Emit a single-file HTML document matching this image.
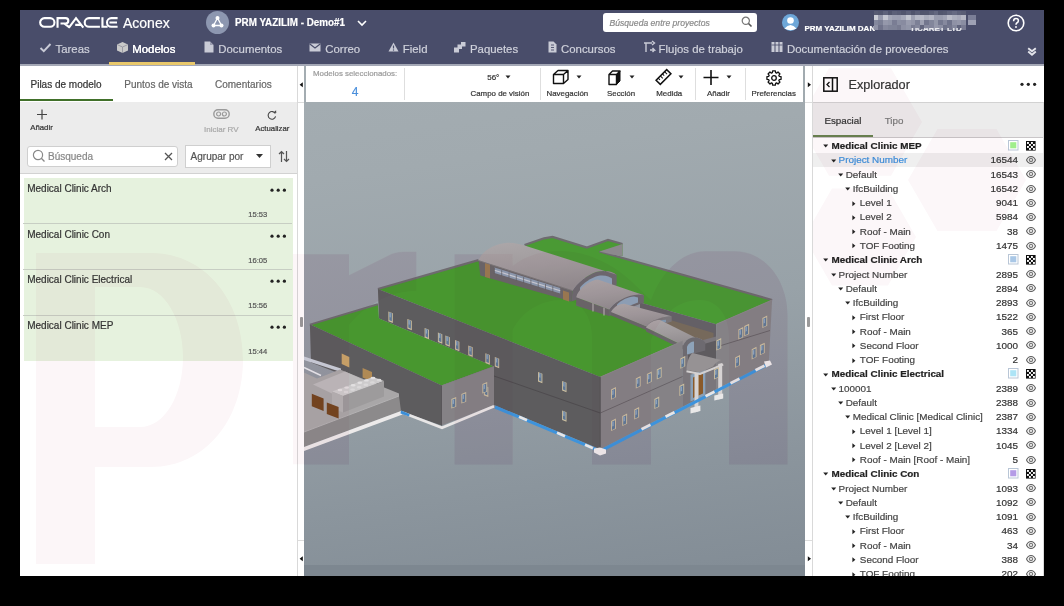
<!DOCTYPE html><html><head><meta charset="utf-8"><style>
html,body{margin:0;padding:0;}
body{width:1064px;height:606px;background:#000;position:relative;overflow:hidden;font-family:"Liberation Sans",sans-serif;}
.t{position:absolute;white-space:nowrap;-webkit-text-stroke:0.2px;}
.r{position:absolute;}
.s{position:absolute;overflow:visible;}
</style></head><body>
<div class="r" style="left:20px;top:10px;width:1024px;height:566px;background:#ffffff;"></div><div class="r" style="left:20px;top:10px;width:1024px;height:54px;background:#494d6a;"></div><div class="r" style="left:20px;top:64px;width:1024px;height:2px;background:#a4a8b6;"></div><div class="r" style="left:109px;top:62px;width:86px;height:3px;background:#e9c86a;"></div><svg class="s" style="left:39px;top:17px;" width="80" height="12" viewBox="0 0 80 12"><g stroke="#fff" stroke-width="2.1" fill="none"><rect x="1.15" y="1.15" width="14.3" height="8.6" rx="4.3"/><path d="M18.55,10.7 V1.15 H26.6 A2.7,2.7 0 0 1 26.6,6.55 H21.5 M25.5,6.55 L30.8,10.7"/><path d="M29.9,10.7 L37,1.2 L44.3,10.7 M36.2,7.9 H42.2"/><path d="M60.9,1.15 H50 A4.3,4.3 0 0 0 50,9.75 H60.9"/><path d="M63.45,0.2 V9.75 H68.6"/><path d="M78.6,1.15 H72.3 A4.3,4.3 0 0 0 72.3,9.75 H78.6 M70.5,5.45 H78"/></g></svg><div class="t" style="left:123.0px;top:16.45px;font-size:14px;line-height:14px;color:#fff;font-weight:400;font-style:normal;">Aconex</div><svg class="s" style="left:206px;top:11px;" width="23" height="23" viewBox="0 0 23 23"><circle cx="11.5" cy="11.5" r="11.5" fill="#8d97b0"/><g stroke="#fff" stroke-width="1.3" fill="none"><path d="M11.5 7 L7.5 14.5 L15.5 14.5 Z"/></g><g fill="#fff"><circle cx="11.5" cy="7" r="2"/><circle cx="7.5" cy="14.5" r="2"/><circle cx="15.5" cy="14.5" r="2"/></g></svg><div class="t" style="left:234.5px;top:16.99px;font-size:11px;line-height:11px;color:#fff;font-weight:700;font-style:normal;transform:scaleX(0.895);transform-origin:0 0;">PRM YAZILIM - Demo#1</div><svg class="s" style="left:356px;top:19px;" width="12" height="8" viewBox="0 0 12 8"><path d="M2 2 L6 6 L10 2" stroke="#fff" stroke-width="1.6" fill="none"/></svg><div class="r" style="left:603px;top:13px;width:154px;height:19px;background:#fff;border-radius:3px;"></div><div class="t" style="left:609.5px;top:19.02px;font-size:8.6px;line-height:8.6px;color:#8a8a8a;font-weight:400;font-style:italic;">Búsqueda entre proyectos</div><svg class="s" style="left:741px;top:16px;" width="12" height="12" viewBox="0 0 12 12"><circle cx="4.8" cy="4.8" r="3.6" stroke="#777" stroke-width="1.2" fill="none"/><path d="M7.5 7.5 L10.5 10.5" stroke="#555" stroke-width="1.6"/></svg><svg class="s" style="left:782px;top:14px;" width="17" height="17" viewBox="0 0 17 17"><circle cx="8.5" cy="8.5" r="8.5" fill="#6ea7d8"/><circle cx="8.5" cy="6.5" r="3.3" fill="#fff"/><path d="M2.5 14.5 Q8.5 7.5 14.5 14.5 Q8.5 18 2.5 14.5Z" fill="#fff"/></svg><div class="t" style="left:804.5px;top:24.53px;font-size:8px;line-height:8px;color:#fff;font-weight:700;font-style:normal;">PRM YAZILIM DAN</div><div class="r" style="left:873.8px;top:10.6px;width:92px;height:20px;overflow:hidden;"><div class="r" style="left:0.0px;top:0.0px;width:4.7px;height:4.9px;background:#575b73"></div><div class="r" style="left:4.6px;top:0.0px;width:4.7px;height:4.9px;background:#53576f"></div><div class="r" style="left:9.2px;top:0.0px;width:4.7px;height:4.9px;background:#5f637b"></div><div class="r" style="left:13.8px;top:0.0px;width:4.7px;height:4.9px;background:#51556d"></div><div class="r" style="left:18.4px;top:0.0px;width:4.7px;height:4.9px;background:#5c6078"></div><div class="r" style="left:23.0px;top:0.0px;width:4.7px;height:4.9px;background:#585c74"></div><div class="r" style="left:27.6px;top:0.0px;width:4.7px;height:4.9px;background:#51556d"></div><div class="r" style="left:32.2px;top:0.0px;width:4.7px;height:4.9px;background:#5c6078"></div><div class="r" style="left:36.8px;top:0.0px;width:4.7px;height:4.9px;background:#50546c"></div><div class="r" style="left:41.4px;top:0.0px;width:4.7px;height:4.9px;background:#5a5e76"></div><div class="r" style="left:46.0px;top:0.0px;width:4.7px;height:4.9px;background:#51556d"></div><div class="r" style="left:50.6px;top:0.0px;width:4.7px;height:4.9px;background:#52566e"></div><div class="r" style="left:55.2px;top:0.0px;width:4.7px;height:4.9px;background:#5a5e76"></div><div class="r" style="left:59.8px;top:0.0px;width:4.7px;height:4.9px;background:#63677f"></div><div class="r" style="left:64.4px;top:0.0px;width:4.7px;height:4.9px;background:#52566e"></div><div class="r" style="left:69.0px;top:0.0px;width:4.7px;height:4.9px;background:#555971"></div><div class="r" style="left:73.6px;top:0.0px;width:4.7px;height:4.9px;background:#5f637b"></div><div class="r" style="left:78.2px;top:0.0px;width:4.7px;height:4.9px;background:#666a82"></div><div class="r" style="left:82.8px;top:0.0px;width:4.7px;height:4.9px;background:#5d6179"></div><div class="r" style="left:87.4px;top:0.0px;width:4.7px;height:4.9px;background:#595d75"></div><div class="r" style="left:0.0px;top:4.8px;width:4.7px;height:4.9px;background:#cbcdd6"></div><div class="r" style="left:4.6px;top:4.8px;width:4.7px;height:4.9px;background:#989bae"></div><div class="r" style="left:9.2px;top:4.8px;width:4.7px;height:4.9px;background:#c5c7d1"></div><div class="r" style="left:13.8px;top:4.8px;width:4.7px;height:4.9px;background:#a5a8b8"></div><div class="r" style="left:18.4px;top:4.8px;width:4.7px;height:4.9px;background:#9da0b2"></div><div class="r" style="left:23.0px;top:4.8px;width:4.7px;height:4.9px;background:#9c9fb1"></div><div class="r" style="left:27.6px;top:4.8px;width:4.7px;height:4.9px;background:#a6a9b9"></div><div class="r" style="left:32.2px;top:4.8px;width:4.7px;height:4.9px;background:#c2c5cf"></div><div class="r" style="left:36.8px;top:4.8px;width:4.7px;height:4.9px;background:#9fa2b3"></div><div class="r" style="left:41.4px;top:4.8px;width:4.7px;height:4.9px;background:#b5b8c5"></div><div class="r" style="left:46.0px;top:4.8px;width:4.7px;height:4.9px;background:#b9bbc8"></div><div class="r" style="left:50.6px;top:4.8px;width:4.7px;height:4.9px;background:#aaadbc"></div><div class="r" style="left:55.2px;top:4.8px;width:4.7px;height:4.9px;background:#b4b6c4"></div><div class="r" style="left:59.8px;top:4.8px;width:4.7px;height:4.9px;background:#999cae"></div><div class="r" style="left:64.4px;top:4.8px;width:4.7px;height:4.9px;background:#999cae"></div><div class="r" style="left:69.0px;top:4.8px;width:4.7px;height:4.9px;background:#a1a4b5"></div><div class="r" style="left:73.6px;top:4.8px;width:4.7px;height:4.9px;background:#bbbdc9"></div><div class="r" style="left:78.2px;top:4.8px;width:4.7px;height:4.9px;background:#adb0be"></div><div class="r" style="left:82.8px;top:4.8px;width:4.7px;height:4.9px;background:#a7a9b9"></div><div class="r" style="left:87.4px;top:4.8px;width:4.7px;height:4.9px;background:#b6b8c5"></div><div class="r" style="left:0.0px;top:9.6px;width:4.7px;height:4.9px;background:#84889d"></div><div class="r" style="left:4.6px;top:9.6px;width:4.7px;height:4.9px;background:#7c8096"></div><div class="r" style="left:9.2px;top:9.6px;width:4.7px;height:4.9px;background:#9598ab"></div><div class="r" style="left:13.8px;top:9.6px;width:4.7px;height:4.9px;background:#9094a7"></div><div class="r" style="left:18.4px;top:9.6px;width:4.7px;height:4.9px;background:#7a7d94"></div><div class="r" style="left:23.0px;top:9.6px;width:4.7px;height:4.9px;background:#8a8ea2"></div><div class="r" style="left:27.6px;top:9.6px;width:4.7px;height:4.9px;background:#888ba0"></div><div class="r" style="left:32.2px;top:9.6px;width:4.7px;height:4.9px;background:#999cae"></div><div class="r" style="left:36.8px;top:9.6px;width:4.7px;height:4.9px;background:#9295a8"></div><div class="r" style="left:41.4px;top:9.6px;width:4.7px;height:4.9px;background:#7c8096"></div><div class="r" style="left:46.0px;top:9.6px;width:4.7px;height:4.9px;background:#9fa2b3"></div><div class="r" style="left:50.6px;top:9.6px;width:4.7px;height:4.9px;background:#73778e"></div><div class="r" style="left:55.2px;top:9.6px;width:4.7px;height:4.9px;background:#82869b"></div><div class="r" style="left:59.8px;top:9.6px;width:4.7px;height:4.9px;background:#9397a9"></div><div class="r" style="left:64.4px;top:9.6px;width:4.7px;height:4.9px;background:#757990"></div><div class="r" style="left:69.0px;top:9.6px;width:4.7px;height:4.9px;background:#86899e"></div><div class="r" style="left:73.6px;top:9.6px;width:4.7px;height:4.9px;background:#6f738b"></div><div class="r" style="left:78.2px;top:9.6px;width:4.7px;height:4.9px;background:#8f92a6"></div><div class="r" style="left:82.8px;top:9.6px;width:4.7px;height:4.9px;background:#9497aa"></div><div class="r" style="left:87.4px;top:9.6px;width:4.7px;height:4.9px;background:#8a8ea2"></div><div class="r" style="left:0.0px;top:14.4px;width:4.7px;height:4.9px;background:#8f92a6"></div><div class="r" style="left:4.6px;top:14.4px;width:4.7px;height:4.9px;background:#70738b"></div><div class="r" style="left:9.2px;top:14.4px;width:4.7px;height:4.9px;background:#85889d"></div><div class="r" style="left:13.8px;top:14.4px;width:4.7px;height:4.9px;background:#7f8398"></div><div class="r" style="left:18.4px;top:14.4px;width:4.7px;height:4.9px;background:#7e8297"></div><div class="r" style="left:23.0px;top:14.4px;width:4.7px;height:4.9px;background:#787b91"></div><div class="r" style="left:27.6px;top:14.4px;width:4.7px;height:4.9px;background:#8d90a4"></div><div class="r" style="left:32.2px;top:14.4px;width:4.7px;height:4.9px;background:#9296a9"></div><div class="r" style="left:36.8px;top:14.4px;width:4.7px;height:4.9px;background:#797c92"></div><div class="r" style="left:41.4px;top:14.4px;width:4.7px;height:4.9px;background:#83869b"></div><div class="r" style="left:46.0px;top:14.4px;width:4.7px;height:4.9px;background:#62667e"></div><div class="r" style="left:50.6px;top:14.4px;width:4.7px;height:4.9px;background:#85889d"></div><div class="r" style="left:55.2px;top:14.4px;width:4.7px;height:4.9px;background:#82859b"></div><div class="r" style="left:59.8px;top:14.4px;width:4.7px;height:4.9px;background:#9598ab"></div><div class="r" style="left:64.4px;top:14.4px;width:4.7px;height:4.9px;background:#8c8fa3"></div><div class="r" style="left:69.0px;top:14.4px;width:4.7px;height:4.9px;background:#6e7289"></div><div class="r" style="left:73.6px;top:14.4px;width:4.7px;height:4.9px;background:#74778e"></div><div class="r" style="left:78.2px;top:14.4px;width:4.7px;height:4.9px;background:#83879c"></div><div class="r" style="left:82.8px;top:14.4px;width:4.7px;height:4.9px;background:#60647d"></div><div class="r" style="left:87.4px;top:14.4px;width:4.7px;height:4.9px;background:#787b92"></div></div><div class="r" style="left:968px;top:15.2px;width:7.8px;height:4.6px;background:#7b7f97;"></div><div class="r" style="left:968px;top:19.8px;width:7.8px;height:5.3px;background:#9ea1b4;"></div><div class="t" style="left:910.0px;top:24.53px;font-size:8px;line-height:8px;color:#e8e9ee;font-weight:700;font-style:normal;clip-path:inset(45% 0 0 0);">TICARET LTD</div><svg class="s" style="left:1007px;top:14px;" width="18" height="18" viewBox="0 0 18 18"><circle cx="9" cy="9" r="7.8" stroke="#fff" stroke-width="1.6" fill="none"/><path d="M6.6 7.2 Q6.6 4.6 9 4.6 Q11.4 4.6 11.4 6.8 Q11.4 8.2 9.8 9 Q9 9.5 9 10.8" stroke="#fff" stroke-width="1.5" fill="none"/><circle cx="9" cy="13" r="0.95" fill="#fff"/></svg><svg class="s" style="left:39px;top:42px;" width="13" height="11" viewBox="0 0 13 11"><path d="M1.5 6 L4.8 9.2 L11.5 2" stroke="#c9cbd6" stroke-width="1.9" fill="none"/></svg><div class="t" style="left:55.5px;top:43.65px;font-size:11.4px;line-height:11.4px;color:#d0d2dc;font-weight:400;font-style:normal;">Tareas</div><svg class="s" style="left:116px;top:41px;" width="13" height="13" viewBox="0 0 13 13"><path d="M6.5 1 L12 3.5 L12 9.5 L6.5 12 L1 9.5 L1 3.5Z" fill="#c9c9c9"/><path d="M1 3.5 L6.5 6 L12 3.5 M6.5 6 L6.5 12" stroke="#8f8f9a" stroke-width="0.8" fill="none"/></svg><div class="t" style="left:132.3px;top:43.65px;font-size:11.4px;line-height:11.4px;color:#fff;font-weight:400;font-style:normal;text-shadow:0 0 0.6px #fff;">Modelos</div><svg class="s" style="left:204px;top:41px;" width="10" height="12" viewBox="0 0 10 12"><path d="M0.5 0.5 L6 0.5 L9.5 4 L9.5 11.5 L0.5 11.5Z" fill="#c9cbd6"/><path d="M6 0.5 L6 4 L9.5 4" fill="#9a9db0"/></svg><div class="t" style="left:218.3px;top:43.65px;font-size:11.4px;line-height:11.4px;color:#d0d2dc;font-weight:400;font-style:normal;">Documentos</div><svg class="s" style="left:309px;top:43px;" width="12" height="9" viewBox="0 0 12 9"><rect x="0.5" y="0.5" width="11" height="8" fill="#c9cbd6"/><path d="M0.5 0.8 L6 5 L11.5 0.8" stroke="#494d6a" stroke-width="1.1" fill="none"/></svg><div class="t" style="left:325.3px;top:43.65px;font-size:11.4px;line-height:11.4px;color:#d0d2dc;font-weight:400;font-style:normal;">Correo</div><svg class="s" style="left:388px;top:42px;" width="11" height="10" viewBox="0 0 11 10"><path d="M5.5 0.5 L10.5 9.5 L0.5 9.5Z" fill="#c9cbd6"/><path d="M5.5 3.5 L5.5 6.5" stroke="#494d6a" stroke-width="1.2"/><circle cx="5.5" cy="8" r="0.7" fill="#494d6a"/></svg><div class="t" style="left:402.8px;top:43.65px;font-size:11.4px;line-height:11.4px;color:#d0d2dc;font-weight:400;font-style:normal;">Field</div><svg class="s" style="left:454px;top:42px;" width="12" height="11" viewBox="0 0 12 11"><rect x="0" y="5.5" width="5" height="5" fill="#c9cbd6"/><rect x="3.5" y="2.5" width="4.5" height="4.5" fill="#c9cbd6"/><rect x="7" y="0" width="4.5" height="4.5" fill="#c9cbd6"/></svg><div class="t" style="left:470.0px;top:43.65px;font-size:11.4px;line-height:11.4px;color:#d0d2dc;font-weight:400;font-style:normal;">Paquetes</div><svg class="s" style="left:548px;top:41px;" width="9" height="12" viewBox="0 0 9 12"><path d="M0.5 0.5 L5.5 0.5 L8.5 3.5 L8.5 11.5 L0.5 11.5Z" fill="#c9cbd6"/><path d="M3 4 L6 4 M3 6.5 L6 6.5 M3 9 L6 9" stroke="#494d6a" stroke-width="0.9"/></svg><div class="t" style="left:561.0px;top:43.65px;font-size:11.4px;line-height:11.4px;color:#d0d2dc;font-weight:400;font-style:normal;">Concursos</div><svg class="s" style="left:643px;top:41px;" width="13" height="12" viewBox="0 0 13 12"><path d="M1 2 L9 2 M3 2 L3 11 M9 0 L11.5 2 L9 4 M7 9 L11.5 9 L9.5 7 M11.5 9 L9.5 11" stroke="#c9cbd6" stroke-width="1.4" fill="none"/></svg><div class="t" style="left:658.6px;top:43.65px;font-size:11.4px;line-height:11.4px;color:#d0d2dc;font-weight:400;font-style:normal;">Flujos de trabajo</div><svg class="s" style="left:771px;top:41px;" width="13" height="11" viewBox="0 0 13 11"><rect x="0.5" y="1" width="3" height="10" fill="#c9cbd6"/><rect x="4.5" y="1" width="3" height="10" fill="#c9cbd6"/><rect x="8.5" y="1" width="3" height="10" fill="#c9cbd6"/><path d="M0.5 4 L11.5 4" stroke="#494d6a" stroke-width="0.8"/></svg><div class="t" style="left:787.0px;top:43.65px;font-size:11.4px;line-height:11.4px;color:#d0d2dc;font-weight:400;font-style:normal;">Documentación de proveedores</div><svg class="s" style="left:1027px;top:46.5px;" width="10" height="9" viewBox="0 0 10 9"><path d="M1.2 1.2 L5 4.3 L8.8 1.2 M1.2 4.6 L5 7.7 L8.8 4.6" stroke="#e4e5ec" stroke-width="1.9" fill="none"/></svg><div class="r" style="left:20px;top:66px;width:277px;height:510px;background:#fff;"></div><div class="r" style="left:297px;top:66px;width:1px;height:510px;background:#d9d9d9;"></div><div class="t" style="left:30.5px;top:79.83px;font-size:10px;line-height:10px;color:#333;font-weight:400;font-style:normal;">Pilas de modelo</div><div class="t" style="left:124.3px;top:79.83px;font-size:10px;line-height:10px;color:#666;font-weight:400;font-style:normal;">Puntos de vista</div><div class="t" style="left:215.0px;top:79.83px;font-size:10px;line-height:10px;color:#666;font-weight:400;font-style:normal;">Comentarios</div><div class="r" style="left:20px;top:99px;width:93px;height:2px;background:#41702a;"></div><div class="r" style="left:20px;top:102px;width:277px;height:71px;background:#ececec;"></div><div class="r" style="left:20px;top:173px;width:277px;height:1px;background:#d2d2d2;"></div><svg class="s" style="left:36px;top:109px;" width="12" height="11" viewBox="0 0 12 11"><path d="M6 0.5 L6 10.5 M1 5.5 L11 5.5" stroke="#444" stroke-width="1.2"/></svg><div class="t" style="left:30.2px;top:123.70px;font-size:7.8px;line-height:7.8px;color:#333;font-weight:400;font-style:normal;">Añadir</div><svg class="s" style="left:213px;top:109px;" width="17" height="10" viewBox="0 0 17 10"><rect x="0.8" y="0.8" width="15.4" height="8.4" rx="4.2" stroke="#9a9a9a" stroke-width="1.4" fill="none"/><circle cx="5.6" cy="5" r="2" stroke="#9a9a9a" stroke-width="1.2" fill="none"/><circle cx="11.4" cy="5" r="2" stroke="#9a9a9a" stroke-width="1.2" fill="none"/></svg><div class="t" style="left:204.0px;top:125.53px;font-size:8px;line-height:8px;color:#a8a8a8;font-weight:400;font-style:normal;">Iniciar RV</div><svg class="s" style="left:266px;top:109px;" width="12" height="12" viewBox="0 0 12 12"><path d="M9.3 4.6 A3.8 3.8 0 1 0 9.6 7.4" stroke="#444" stroke-width="1.1" fill="none"/><path d="M7.6 3.6 L10.3 3.9 L10.1 1.2Z" fill="#444"/></svg><div class="t" style="left:255.2px;top:124.70px;font-size:7.8px;line-height:7.8px;color:#333;font-weight:400;font-style:normal;">Actualizar</div><div class="r" style="left:26.5px;top:146px;width:151.5px;height:20.5px;background:#fff;border:1px solid #cfcfcf;box-sizing:border-box;border-radius:3px;"></div><svg class="s" style="left:32px;top:149px;" width="14" height="14" viewBox="0 0 14 14"><circle cx="6" cy="6" r="4.6" stroke="#888" stroke-width="1.2" fill="none"/><path d="M9.3 9.3 L12.5 12.5" stroke="#888" stroke-width="1.3"/></svg><div class="t" style="left:48.0px;top:151.84px;font-size:10px;line-height:10px;color:#888;font-weight:400;font-style:normal;">Búsqueda</div><svg class="s" style="left:164px;top:152px;" width="9" height="9" viewBox="0 0 9 9"><path d="M1 1 L8 8 M8 1 L1 8" stroke="#555" stroke-width="1.3"/></svg><div class="r" style="left:185.3px;top:145.3px;width:86px;height:23px;background:#fff;border:1px solid #cfcfcf;box-sizing:border-box;"></div><div class="t" style="left:190.6px;top:151.84px;font-size:10px;line-height:10px;color:#555;font-weight:400;font-style:normal;">Agrupar por</div><svg class="s" style="left:255px;top:153px;" width="9" height="6" viewBox="0 0 9 6"><path d="M1 1 L8 1 L4.5 5Z" fill="#333"/></svg><svg class="s" style="left:278px;top:150px;" width="12" height="13" viewBox="0 0 12 13"><path d="M3.5 12 L3.5 1.5 M1 4 L3.5 1.5 L6 4 M8.5 1 L8.5 11.5 M6 9 L8.5 11.5 L11 9" stroke="#555" stroke-width="1.2" fill="none"/></svg><div class="r" style="left:23.5px;top:178.2px;width:269px;height:45.6px;background:#e6f2de;"></div><div class="t" style="left:27.2px;top:183.84px;font-size:10px;line-height:10px;color:#333;font-weight:400;font-style:normal;">Medical Clinic Arch</div><svg class="s" style="left:270px;top:188.2px;" width="17" height="5" viewBox="0 0 17 5"><circle cx="2" cy="2.2" r="1.6" fill="#222"/><circle cx="8.2" cy="2.2" r="1.6" fill="#222"/><circle cx="14.4" cy="2.2" r="1.6" fill="#222"/></svg><div class="t" style="left:248.2px;top:210.87px;font-size:7.6px;line-height:7.6px;color:#555;font-weight:400;font-style:normal;">15:53</div><div class="r" style="left:23.5px;top:223.8px;width:269px;height:45.6px;background:#e6f2de;"></div><div class="r" style="left:23px;top:223px;width:269.4px;height:1px;background:#c7cec3;"></div><div class="t" style="left:27.2px;top:229.84px;font-size:10px;line-height:10px;color:#333;font-weight:400;font-style:normal;">Medical Clinic Con</div><svg class="s" style="left:270px;top:233.8px;" width="17" height="5" viewBox="0 0 17 5"><circle cx="2" cy="2.2" r="1.6" fill="#222"/><circle cx="8.2" cy="2.2" r="1.6" fill="#222"/><circle cx="14.4" cy="2.2" r="1.6" fill="#222"/></svg><div class="t" style="left:248.2px;top:256.87px;font-size:7.6px;line-height:7.6px;color:#555;font-weight:400;font-style:normal;">16:05</div><div class="r" style="left:23.5px;top:269.4px;width:269px;height:45.6px;background:#e6f2de;"></div><div class="r" style="left:23px;top:269px;width:269.4px;height:1px;background:#c7cec3;"></div><div class="t" style="left:27.2px;top:274.84px;font-size:10px;line-height:10px;color:#333;font-weight:400;font-style:normal;">Medical Clinic Electrical</div><svg class="s" style="left:270px;top:279.4px;" width="17" height="5" viewBox="0 0 17 5"><circle cx="2" cy="2.2" r="1.6" fill="#222"/><circle cx="8.2" cy="2.2" r="1.6" fill="#222"/><circle cx="14.4" cy="2.2" r="1.6" fill="#222"/></svg><div class="t" style="left:248.2px;top:301.87px;font-size:7.6px;line-height:7.6px;color:#555;font-weight:400;font-style:normal;">15:56</div><div class="r" style="left:23.5px;top:315.0px;width:269px;height:45.6px;background:#e6f2de;"></div><div class="r" style="left:23px;top:315px;width:269.4px;height:1px;background:#c7cec3;"></div><div class="t" style="left:27.2px;top:320.84px;font-size:10px;line-height:10px;color:#333;font-weight:400;font-style:normal;">Medical Clinic MEP</div><svg class="s" style="left:270px;top:325.0px;" width="17" height="5" viewBox="0 0 17 5"><circle cx="2" cy="2.2" r="1.6" fill="#222"/><circle cx="8.2" cy="2.2" r="1.6" fill="#222"/><circle cx="14.4" cy="2.2" r="1.6" fill="#222"/></svg><div class="t" style="left:248.2px;top:347.87px;font-size:7.6px;line-height:7.6px;color:#555;font-weight:400;font-style:normal;">15:44</div><div class="r" style="left:298px;top:66px;width:6px;height:510px;background:#fff;"></div><div class="r" style="left:298px;top:102px;width:6px;height:1px;background:#dcdcdc;"></div><div class="r" style="left:298px;top:540px;width:6px;height:1px;background:#dcdcdc;"></div><svg class="s" style="left:299px;top:82px;" width="5" height="6" viewBox="0 0 5 6"><path d="M3.8 0.3 L3.8 5.2 L0.6 2.75Z" fill="#111"/></svg><svg class="s" style="left:299px;top:556px;" width="5" height="6" viewBox="0 0 5 6"><path d="M3.8 0.3 L3.8 5.2 L0.6 2.75Z" fill="#111"/></svg><div class="r" style="left:299.5px;top:317px;width:3.3px;height:10px;background:#9a9a9a;border-radius:1px;"></div><div class="r" style="left:304px;top:66px;width:501px;height:510px;background:linear-gradient(172deg,#a4adb2 0%,#a1aaaf 20%,#98a2a8 50%,#8b959d 78%,#838d96 97%);"></div><div class="r" style="left:304px;top:564.5px;width:501px;height:11.5px;background:#7d8790;"></div><div class="r" style="left:306px;top:66px;width:497px;height:35.5px;background:#fff;"></div><div class="r" style="left:404px;top:68px;width:1px;height:32px;background:#dedede;"></div><div class="r" style="left:539.5px;top:68px;width:1px;height:32px;background:#dedede;"></div><div class="r" style="left:695px;top:68px;width:1px;height:32px;background:#dedede;"></div><div class="r" style="left:744.5px;top:68px;width:1px;height:32px;background:#dedede;"></div><div class="t" style="left:313.0px;top:69.61px;font-size:7.9px;line-height:7.9px;color:#9a9a9a;font-weight:400;font-style:normal;">Modelos seleccionados:</div><div class="t" style="left:351.8px;top:86.14px;font-size:12px;line-height:12px;color:#4a8fdc;font-weight:400;font-style:normal;">4</div><div class="t" style="left:487.2px;top:73.53px;font-size:8px;line-height:8px;color:#333;font-weight:400;font-style:normal;">56°</div><svg class="s" style="left:504.5px;top:75px;" width="6" height="4" viewBox="0 0 6 4"><path d="M0.5 0.5 L5.5 0.5 L3 3.5Z" fill="#222"/></svg><div class="t" style="left:470.5px;top:89.61px;font-size:7.9px;line-height:7.9px;color:#333;font-weight:400;font-style:normal;">Campo de visión</div><svg class="s" style="left:552px;top:69px;" width="18" height="16" viewBox="0 0 18 16"><path d="M1.5 5.5 L6 1.5 L16 1.5 L16 10.5 L11.5 14.5 L1.5 14.5Z M1.5 5.5 L11.5 5.5 L16 1.5 M11.5 5.5 L11.5 14.5" stroke="#111" stroke-width="1.4" fill="none" stroke-linejoin="round"/></svg><svg class="s" style="left:575.5px;top:75px;" width="6" height="4" viewBox="0 0 6 4"><path d="M0.5 0.5 L5.5 0.5 L3 3.5Z" fill="#222"/></svg><div class="t" style="left:546.5px;top:89.61px;font-size:7.9px;line-height:7.9px;color:#333;font-weight:400;font-style:normal;">Navegación</div><svg class="s" style="left:608px;top:69.5px;" width="13" height="15" viewBox="0 0 13 15"><path d="M8.5 4.5 L12 1 L12 11 L8.5 14.5Z" fill="#111" stroke="#111" stroke-width="1" stroke-linejoin="round"/><path d="M1 4.5 L8.5 4.5 L8.5 14.5 L1 14.5Z M1 4.5 L4.5 1 L12 1 L8.5 4.5" stroke="#111" stroke-width="1.4" fill="none" stroke-linejoin="round"/></svg><svg class="s" style="left:628.5px;top:75px;" width="6" height="4" viewBox="0 0 6 4"><path d="M0.5 0.5 L5.5 0.5 L3 3.5Z" fill="#222"/></svg><div class="t" style="left:607.0px;top:89.61px;font-size:7.9px;line-height:7.9px;color:#333;font-weight:400;font-style:normal;">Sección</div><svg class="s" style="left:655px;top:69px;" width="17" height="16" viewBox="0 0 17 16"><g transform="rotate(-45 8.5 8)"><rect x="1" y="5" width="15" height="6" stroke="#111" stroke-width="1.5" fill="none"/><path d="M4 5 L4 7.5 M7 5 L7 8.5 M10 5 L10 7.5 M13 5 L13 8.5" stroke="#111" stroke-width="1"/></g></svg><svg class="s" style="left:677.5px;top:75px;" width="6" height="4" viewBox="0 0 6 4"><path d="M0.5 0.5 L5.5 0.5 L3 3.5Z" fill="#222"/></svg><div class="t" style="left:656.3px;top:89.61px;font-size:7.9px;line-height:7.9px;color:#333;font-weight:400;font-style:normal;">Medida</div><svg class="s" style="left:703px;top:70px;" width="16" height="15" viewBox="0 0 16 15"><path d="M8 0 L8 15 M0.5 7.5 L15.5 7.5" stroke="#111" stroke-width="1.6"/></svg><svg class="s" style="left:725.5px;top:75px;" width="6" height="4" viewBox="0 0 6 4"><path d="M0.5 0.5 L5.5 0.5 L3 3.5Z" fill="#222"/></svg><div class="t" style="left:707.0px;top:89.61px;font-size:7.9px;line-height:7.9px;color:#333;font-weight:400;font-style:normal;">Añadir</div><svg class="s" style="left:766px;top:70px;" width="16" height="16" viewBox="0 0 16 16"><path d="M13.25,6.37 L15.07,6.64 L15.07,9.36 L13.25,9.63 L12.86,10.57 L13.96,12.04 L12.04,13.96 L10.57,12.86 L9.63,13.25 L9.36,15.07 L6.64,15.07 L6.37,13.25 L5.43,12.86 L3.96,13.96 L2.04,12.04 L3.14,10.57 L2.75,9.63 L0.93,9.36 L0.93,6.64 L2.75,6.37 L3.14,5.43 L2.04,3.96 L3.96,2.04 L5.43,3.14 L6.37,2.75 L6.64,0.93 L9.36,0.93 L9.63,2.75 L10.57,3.14 L12.04,2.04 L13.96,3.96 L12.86,5.43Z" stroke="#111" stroke-width="1.3" fill="none" stroke-linejoin="round"/><circle cx="8" cy="8" r="2.3" stroke="#111" stroke-width="1.3" fill="none"/></svg><div class="t" style="left:751.6px;top:89.61px;font-size:7.9px;line-height:7.9px;color:#333;font-weight:400;font-style:normal;">Preferencias</div><div class="r" style="left:805px;top:66px;width:7px;height:510px;background:#fff;"></div><div class="r" style="left:812px;top:66px;width:1px;height:510px;background:#d9d9d9;"></div><div class="r" style="left:805px;top:102px;width:7px;height:1px;background:#dcdcdc;"></div><div class="r" style="left:805px;top:540px;width:7px;height:1px;background:#dcdcdc;"></div><svg class="s" style="left:807px;top:82px;" width="5" height="6" viewBox="0 0 5 6"><path d="M0.8 0.3 L0.8 5.2 L4 2.75Z" fill="#111"/></svg><svg class="s" style="left:807px;top:556px;" width="5" height="6" viewBox="0 0 5 6"><path d="M0.8 0.3 L0.8 5.2 L4 2.75Z" fill="#111"/></svg><div class="r" style="left:806.5px;top:317px;width:3.3px;height:10px;background:#9a9a9a;border-radius:1px;"></div><div class="r" style="left:813px;top:66px;width:231px;height:510px;background:#fff;"></div><svg class="s" style="left:823px;top:77px;" width="15" height="15" viewBox="0 0 15 15"><rect x="0.8" y="0.8" width="13.4" height="13.4" stroke="#111" stroke-width="1.5" fill="none"/><path d="M9.5 1 L9.5 14" stroke="#111" stroke-width="1.5"/><path d="M6.5 5 L4 7.5 L6.5 10" stroke="#111" stroke-width="1.3" fill="none"/></svg><div class="t" style="left:848.5px;top:78.55px;font-size:12.7px;line-height:12.7px;color:#333;font-weight:400;font-style:normal;">Explorador</div><svg class="s" style="left:1020px;top:82px;" width="17" height="5" viewBox="0 0 17 5"><circle cx="2" cy="2.3" r="1.6" fill="#222"/><circle cx="8.3" cy="2.3" r="1.6" fill="#222"/><circle cx="14.6" cy="2.3" r="1.6" fill="#222"/></svg><div class="r" style="left:813px;top:102px;width:231px;height:1px;background:#d2d2d2;"></div><div class="r" style="left:813px;top:103px;width:231px;height:34.5px;background:#ececec;"></div><div class="t" style="left:824.4px;top:116.00px;font-size:9.8px;line-height:9.8px;color:#333;font-weight:400;font-style:normal;">Espacial</div><div class="t" style="left:884.7px;top:116.00px;font-size:9.8px;line-height:9.8px;color:#7a7a7a;font-weight:400;font-style:normal;">Tipo</div><div class="r" style="left:813px;top:134.8px;width:60.3px;height:2.3px;background:#688250;"></div><div class="r" style="left:813px;top:137.1px;width:231px;height:1.3px;background:#c9c6c8;"></div><div class="r" style="left:813px;top:138px;width:231px;height:438px;overflow:hidden;"><svg class="s" style="left:10.2px;top:6.30px" width="6" height="4" viewBox="0 0 6 4"><path d="M0.2 0.4 L5.2 0.4 L2.7 3.4Z" fill="#222"/></svg><div class="t" style="left:18.6px;top:2.92px;font-size:9.9px;line-height:9.9px;color:#222;font-weight:700;">Medical Clinic MEP</div><svg class="s" style="left:195.0px;top:2.10px" width="11" height="10" viewBox="0 0 11 10"><rect x="0.5" y="0.5" width="9.5" height="9.5" fill="#fff" stroke="#b9c6d6" stroke-width="1"/><rect x="2.2" y="2.2" width="6.1" height="6.1" fill="#a0ee8c"/></svg><svg class="s" style="left:213.3px;top:2.80px" width="10" height="10" viewBox="0 0 10 10"><rect x="0" y="0" width="9.6" height="9.6" fill="#111"/><rect x="1" y="1" width="1.9" height="1.9" fill="#fff"/><rect x="1" y="5" width="1.9" height="1.9" fill="#fff"/><rect x="3" y="3" width="1.9" height="1.9" fill="#fff"/><rect x="3" y="7" width="1.9" height="1.9" fill="#fff"/><rect x="5" y="1" width="1.9" height="1.9" fill="#fff"/><rect x="5" y="5" width="1.9" height="1.9" fill="#fff"/><rect x="7" y="3" width="1.9" height="1.9" fill="#fff"/><rect x="7" y="7" width="1.9" height="1.9" fill="#fff"/></svg><div class="r" style="left:0px;top:15.17px;width:230px;height:13.6px;background:#efefef;"></div><svg class="s" style="left:17.5px;top:20.57px" width="6" height="4" viewBox="0 0 6 4"><path d="M0.2 0.4 L5.2 0.4 L2.7 3.4Z" fill="#222"/></svg><div class="t" style="left:25.6px;top:16.92px;font-size:9.9px;line-height:9.9px;color:#3d8fdc;font-weight:400;">Project Number</div><div class="t" style="left:145.0px;width:60px;text-align:right;top:16.92px;font-size:9.9px;line-height:9.9px;color:#333;">16544</div><svg class="s" style="left:213.2px;top:17.97px" width="10" height="8" viewBox="0 0 10 8"><path d="M0.55 4 C2.6 -0.67, 7.4 -0.67, 9.45 4 C7.4 8.67, 2.6 8.67, 0.55 4Z" stroke="#5a5a5a" stroke-width="1.05" fill="none"/><circle cx="5" cy="4" r="1.8" stroke="#5a5a5a" stroke-width="0.9" fill="none"/><circle cx="5" cy="4" r="0.55" fill="#5a5a5a"/></svg><svg class="s" style="left:24.7px;top:34.84px" width="6" height="4" viewBox="0 0 6 4"><path d="M0.2 0.4 L5.2 0.4 L2.7 3.4Z" fill="#222"/></svg><div class="t" style="left:32.7px;top:31.92px;font-size:9.9px;line-height:9.9px;color:#444;font-weight:400;">Default</div><div class="t" style="left:145.0px;width:60px;text-align:right;top:31.92px;font-size:9.9px;line-height:9.9px;color:#333;">16543</div><svg class="s" style="left:213.2px;top:32.24px" width="10" height="8" viewBox="0 0 10 8"><path d="M0.55 4 C2.6 -0.67, 7.4 -0.67, 9.45 4 C7.4 8.67, 2.6 8.67, 0.55 4Z" stroke="#5a5a5a" stroke-width="1.05" fill="none"/><circle cx="5" cy="4" r="1.8" stroke="#5a5a5a" stroke-width="0.9" fill="none"/><circle cx="5" cy="4" r="0.55" fill="#5a5a5a"/></svg><svg class="s" style="left:32.0px;top:49.10px" width="6" height="4" viewBox="0 0 6 4"><path d="M0.2 0.4 L5.2 0.4 L2.7 3.4Z" fill="#222"/></svg><div class="t" style="left:39.8px;top:45.92px;font-size:9.9px;line-height:9.9px;color:#444;font-weight:400;">IfcBuilding</div><div class="t" style="left:145.0px;width:60px;text-align:right;top:45.92px;font-size:9.9px;line-height:9.9px;color:#333;">16542</div><svg class="s" style="left:213.2px;top:46.50px" width="10" height="8" viewBox="0 0 10 8"><path d="M0.55 4 C2.6 -0.67, 7.4 -0.67, 9.45 4 C7.4 8.67, 2.6 8.67, 0.55 4Z" stroke="#5a5a5a" stroke-width="1.05" fill="none"/><circle cx="5" cy="4" r="1.8" stroke="#5a5a5a" stroke-width="0.9" fill="none"/><circle cx="5" cy="4" r="0.55" fill="#5a5a5a"/></svg><svg class="s" style="left:39.2px;top:62.57px" width="4" height="6" viewBox="0 0 4 6"><path d="M0.4 0.2 L3.4 2.7 L0.4 5.2Z" fill="#222"/></svg><div class="t" style="left:46.8px;top:59.92px;font-size:9.9px;line-height:9.9px;color:#444;font-weight:400;">Level 1</div><div class="t" style="left:145.0px;width:60px;text-align:right;top:59.92px;font-size:9.9px;line-height:9.9px;color:#333;">9041</div><svg class="s" style="left:213.2px;top:60.77px" width="10" height="8" viewBox="0 0 10 8"><path d="M0.55 4 C2.6 -0.67, 7.4 -0.67, 9.45 4 C7.4 8.67, 2.6 8.67, 0.55 4Z" stroke="#5a5a5a" stroke-width="1.05" fill="none"/><circle cx="5" cy="4" r="1.8" stroke="#5a5a5a" stroke-width="0.9" fill="none"/><circle cx="5" cy="4" r="0.55" fill="#5a5a5a"/></svg><svg class="s" style="left:39.2px;top:76.84px" width="4" height="6" viewBox="0 0 4 6"><path d="M0.4 0.2 L3.4 2.7 L0.4 5.2Z" fill="#222"/></svg><div class="t" style="left:46.8px;top:73.92px;font-size:9.9px;line-height:9.9px;color:#444;font-weight:400;">Level 2</div><div class="t" style="left:145.0px;width:60px;text-align:right;top:73.92px;font-size:9.9px;line-height:9.9px;color:#333;">5984</div><svg class="s" style="left:213.2px;top:75.04px" width="10" height="8" viewBox="0 0 10 8"><path d="M0.55 4 C2.6 -0.67, 7.4 -0.67, 9.45 4 C7.4 8.67, 2.6 8.67, 0.55 4Z" stroke="#5a5a5a" stroke-width="1.05" fill="none"/><circle cx="5" cy="4" r="1.8" stroke="#5a5a5a" stroke-width="0.9" fill="none"/><circle cx="5" cy="4" r="0.55" fill="#5a5a5a"/></svg><svg class="s" style="left:39.2px;top:91.11px" width="4" height="6" viewBox="0 0 4 6"><path d="M0.4 0.2 L3.4 2.7 L0.4 5.2Z" fill="#222"/></svg><div class="t" style="left:46.8px;top:88.92px;font-size:9.9px;line-height:9.9px;color:#444;font-weight:400;">Roof - Main</div><div class="t" style="left:145.0px;width:60px;text-align:right;top:88.92px;font-size:9.9px;line-height:9.9px;color:#333;">38</div><svg class="s" style="left:213.2px;top:89.31px" width="10" height="8" viewBox="0 0 10 8"><path d="M0.55 4 C2.6 -0.67, 7.4 -0.67, 9.45 4 C7.4 8.67, 2.6 8.67, 0.55 4Z" stroke="#5a5a5a" stroke-width="1.05" fill="none"/><circle cx="5" cy="4" r="1.8" stroke="#5a5a5a" stroke-width="0.9" fill="none"/><circle cx="5" cy="4" r="0.55" fill="#5a5a5a"/></svg><svg class="s" style="left:39.2px;top:105.38px" width="4" height="6" viewBox="0 0 4 6"><path d="M0.4 0.2 L3.4 2.7 L0.4 5.2Z" fill="#222"/></svg><div class="t" style="left:46.8px;top:102.92px;font-size:9.9px;line-height:9.9px;color:#444;font-weight:400;">TOF Footing</div><div class="t" style="left:145.0px;width:60px;text-align:right;top:102.92px;font-size:9.9px;line-height:9.9px;color:#333;">1475</div><svg class="s" style="left:213.2px;top:103.58px" width="10" height="8" viewBox="0 0 10 8"><path d="M0.55 4 C2.6 -0.67, 7.4 -0.67, 9.45 4 C7.4 8.67, 2.6 8.67, 0.55 4Z" stroke="#5a5a5a" stroke-width="1.05" fill="none"/><circle cx="5" cy="4" r="1.8" stroke="#5a5a5a" stroke-width="0.9" fill="none"/><circle cx="5" cy="4" r="0.55" fill="#5a5a5a"/></svg><svg class="s" style="left:10.2px;top:120.44px" width="6" height="4" viewBox="0 0 6 4"><path d="M0.2 0.4 L5.2 0.4 L2.7 3.4Z" fill="#222"/></svg><div class="t" style="left:18.6px;top:116.92px;font-size:9.9px;line-height:9.9px;color:#222;font-weight:700;">Medical Clinic Arch</div><svg class="s" style="left:195.0px;top:116.24px" width="11" height="10" viewBox="0 0 11 10"><rect x="0.5" y="0.5" width="9.5" height="9.5" fill="#fff" stroke="#b9c6d6" stroke-width="1"/><rect x="2.2" y="2.2" width="6.1" height="6.1" fill="#a9c7e6"/></svg><svg class="s" style="left:213.3px;top:116.94px" width="10" height="10" viewBox="0 0 10 10"><rect x="0" y="0" width="9.6" height="9.6" fill="#111"/><rect x="1" y="1" width="1.9" height="1.9" fill="#fff"/><rect x="1" y="5" width="1.9" height="1.9" fill="#fff"/><rect x="3" y="3" width="1.9" height="1.9" fill="#fff"/><rect x="3" y="7" width="1.9" height="1.9" fill="#fff"/><rect x="5" y="1" width="1.9" height="1.9" fill="#fff"/><rect x="5" y="5" width="1.9" height="1.9" fill="#fff"/><rect x="7" y="3" width="1.9" height="1.9" fill="#fff"/><rect x="7" y="7" width="1.9" height="1.9" fill="#fff"/></svg><svg class="s" style="left:17.5px;top:134.71px" width="6" height="4" viewBox="0 0 6 4"><path d="M0.2 0.4 L5.2 0.4 L2.7 3.4Z" fill="#222"/></svg><div class="t" style="left:25.6px;top:131.92px;font-size:9.9px;line-height:9.9px;color:#444;font-weight:400;">Project Number</div><div class="t" style="left:145.0px;width:60px;text-align:right;top:131.92px;font-size:9.9px;line-height:9.9px;color:#333;">2895</div><svg class="s" style="left:213.2px;top:132.11px" width="10" height="8" viewBox="0 0 10 8"><path d="M0.55 4 C2.6 -0.67, 7.4 -0.67, 9.45 4 C7.4 8.67, 2.6 8.67, 0.55 4Z" stroke="#5a5a5a" stroke-width="1.05" fill="none"/><circle cx="5" cy="4" r="1.8" stroke="#5a5a5a" stroke-width="0.9" fill="none"/><circle cx="5" cy="4" r="0.55" fill="#5a5a5a"/></svg><svg class="s" style="left:24.7px;top:148.98px" width="6" height="4" viewBox="0 0 6 4"><path d="M0.2 0.4 L5.2 0.4 L2.7 3.4Z" fill="#222"/></svg><div class="t" style="left:32.7px;top:145.92px;font-size:9.9px;line-height:9.9px;color:#444;font-weight:400;">Default</div><div class="t" style="left:145.0px;width:60px;text-align:right;top:145.92px;font-size:9.9px;line-height:9.9px;color:#333;">2894</div><svg class="s" style="left:213.2px;top:146.38px" width="10" height="8" viewBox="0 0 10 8"><path d="M0.55 4 C2.6 -0.67, 7.4 -0.67, 9.45 4 C7.4 8.67, 2.6 8.67, 0.55 4Z" stroke="#5a5a5a" stroke-width="1.05" fill="none"/><circle cx="5" cy="4" r="1.8" stroke="#5a5a5a" stroke-width="0.9" fill="none"/><circle cx="5" cy="4" r="0.55" fill="#5a5a5a"/></svg><svg class="s" style="left:32.0px;top:163.25px" width="6" height="4" viewBox="0 0 6 4"><path d="M0.2 0.4 L5.2 0.4 L2.7 3.4Z" fill="#222"/></svg><div class="t" style="left:39.8px;top:159.92px;font-size:9.9px;line-height:9.9px;color:#444;font-weight:400;">IfcBuilding</div><div class="t" style="left:145.0px;width:60px;text-align:right;top:159.92px;font-size:9.9px;line-height:9.9px;color:#333;">2893</div><svg class="s" style="left:213.2px;top:160.65px" width="10" height="8" viewBox="0 0 10 8"><path d="M0.55 4 C2.6 -0.67, 7.4 -0.67, 9.45 4 C7.4 8.67, 2.6 8.67, 0.55 4Z" stroke="#5a5a5a" stroke-width="1.05" fill="none"/><circle cx="5" cy="4" r="1.8" stroke="#5a5a5a" stroke-width="0.9" fill="none"/><circle cx="5" cy="4" r="0.55" fill="#5a5a5a"/></svg><svg class="s" style="left:39.2px;top:176.72px" width="4" height="6" viewBox="0 0 4 6"><path d="M0.4 0.2 L3.4 2.7 L0.4 5.2Z" fill="#222"/></svg><div class="t" style="left:46.8px;top:173.92px;font-size:9.9px;line-height:9.9px;color:#444;font-weight:400;">First Floor</div><div class="t" style="left:145.0px;width:60px;text-align:right;top:173.92px;font-size:9.9px;line-height:9.9px;color:#333;">1522</div><svg class="s" style="left:213.2px;top:174.92px" width="10" height="8" viewBox="0 0 10 8"><path d="M0.55 4 C2.6 -0.67, 7.4 -0.67, 9.45 4 C7.4 8.67, 2.6 8.67, 0.55 4Z" stroke="#5a5a5a" stroke-width="1.05" fill="none"/><circle cx="5" cy="4" r="1.8" stroke="#5a5a5a" stroke-width="0.9" fill="none"/><circle cx="5" cy="4" r="0.55" fill="#5a5a5a"/></svg><svg class="s" style="left:39.2px;top:190.98px" width="4" height="6" viewBox="0 0 4 6"><path d="M0.4 0.2 L3.4 2.7 L0.4 5.2Z" fill="#222"/></svg><div class="t" style="left:46.8px;top:188.92px;font-size:9.9px;line-height:9.9px;color:#444;font-weight:400;">Roof - Main</div><div class="t" style="left:145.0px;width:60px;text-align:right;top:188.92px;font-size:9.9px;line-height:9.9px;color:#333;">365</div><svg class="s" style="left:213.2px;top:189.18px" width="10" height="8" viewBox="0 0 10 8"><path d="M0.55 4 C2.6 -0.67, 7.4 -0.67, 9.45 4 C7.4 8.67, 2.6 8.67, 0.55 4Z" stroke="#5a5a5a" stroke-width="1.05" fill="none"/><circle cx="5" cy="4" r="1.8" stroke="#5a5a5a" stroke-width="0.9" fill="none"/><circle cx="5" cy="4" r="0.55" fill="#5a5a5a"/></svg><svg class="s" style="left:39.2px;top:205.25px" width="4" height="6" viewBox="0 0 4 6"><path d="M0.4 0.2 L3.4 2.7 L0.4 5.2Z" fill="#222"/></svg><div class="t" style="left:46.8px;top:202.92px;font-size:9.9px;line-height:9.9px;color:#444;font-weight:400;">Second Floor</div><div class="t" style="left:145.0px;width:60px;text-align:right;top:202.92px;font-size:9.9px;line-height:9.9px;color:#333;">1000</div><svg class="s" style="left:213.2px;top:203.45px" width="10" height="8" viewBox="0 0 10 8"><path d="M0.55 4 C2.6 -0.67, 7.4 -0.67, 9.45 4 C7.4 8.67, 2.6 8.67, 0.55 4Z" stroke="#5a5a5a" stroke-width="1.05" fill="none"/><circle cx="5" cy="4" r="1.8" stroke="#5a5a5a" stroke-width="0.9" fill="none"/><circle cx="5" cy="4" r="0.55" fill="#5a5a5a"/></svg><svg class="s" style="left:39.2px;top:219.52px" width="4" height="6" viewBox="0 0 4 6"><path d="M0.4 0.2 L3.4 2.7 L0.4 5.2Z" fill="#222"/></svg><div class="t" style="left:46.8px;top:216.92px;font-size:9.9px;line-height:9.9px;color:#444;font-weight:400;">TOF Footing</div><div class="t" style="left:145.0px;width:60px;text-align:right;top:216.92px;font-size:9.9px;line-height:9.9px;color:#333;">2</div><svg class="s" style="left:213.2px;top:217.72px" width="10" height="8" viewBox="0 0 10 8"><path d="M0.55 4 C2.6 -0.67, 7.4 -0.67, 9.45 4 C7.4 8.67, 2.6 8.67, 0.55 4Z" stroke="#5a5a5a" stroke-width="1.05" fill="none"/><circle cx="5" cy="4" r="1.8" stroke="#5a5a5a" stroke-width="0.9" fill="none"/><circle cx="5" cy="4" r="0.55" fill="#5a5a5a"/></svg><svg class="s" style="left:10.2px;top:234.59px" width="6" height="4" viewBox="0 0 6 4"><path d="M0.2 0.4 L5.2 0.4 L2.7 3.4Z" fill="#222"/></svg><div class="t" style="left:18.6px;top:230.92px;font-size:9.9px;line-height:9.9px;color:#222;font-weight:700;">Medical Clinic Electrical</div><svg class="s" style="left:195.0px;top:230.39px" width="11" height="10" viewBox="0 0 11 10"><rect x="0.5" y="0.5" width="9.5" height="9.5" fill="#fff" stroke="#b9c6d6" stroke-width="1"/><rect x="2.2" y="2.2" width="6.1" height="6.1" fill="#ace4f6"/></svg><svg class="s" style="left:213.3px;top:231.09px" width="10" height="10" viewBox="0 0 10 10"><rect x="0" y="0" width="9.6" height="9.6" fill="#111"/><rect x="1" y="1" width="1.9" height="1.9" fill="#fff"/><rect x="1" y="5" width="1.9" height="1.9" fill="#fff"/><rect x="3" y="3" width="1.9" height="1.9" fill="#fff"/><rect x="3" y="7" width="1.9" height="1.9" fill="#fff"/><rect x="5" y="1" width="1.9" height="1.9" fill="#fff"/><rect x="5" y="5" width="1.9" height="1.9" fill="#fff"/><rect x="7" y="3" width="1.9" height="1.9" fill="#fff"/><rect x="7" y="7" width="1.9" height="1.9" fill="#fff"/></svg><svg class="s" style="left:17.5px;top:248.86px" width="6" height="4" viewBox="0 0 6 4"><path d="M0.2 0.4 L5.2 0.4 L2.7 3.4Z" fill="#222"/></svg><div class="t" style="left:25.6px;top:245.92px;font-size:9.9px;line-height:9.9px;color:#444;font-weight:400;">100001</div><div class="t" style="left:145.0px;width:60px;text-align:right;top:245.92px;font-size:9.9px;line-height:9.9px;color:#333;">2389</div><svg class="s" style="left:213.2px;top:246.26px" width="10" height="8" viewBox="0 0 10 8"><path d="M0.55 4 C2.6 -0.67, 7.4 -0.67, 9.45 4 C7.4 8.67, 2.6 8.67, 0.55 4Z" stroke="#5a5a5a" stroke-width="1.05" fill="none"/><circle cx="5" cy="4" r="1.8" stroke="#5a5a5a" stroke-width="0.9" fill="none"/><circle cx="5" cy="4" r="0.55" fill="#5a5a5a"/></svg><svg class="s" style="left:24.7px;top:263.12px" width="6" height="4" viewBox="0 0 6 4"><path d="M0.2 0.4 L5.2 0.4 L2.7 3.4Z" fill="#222"/></svg><div class="t" style="left:32.7px;top:259.92px;font-size:9.9px;line-height:9.9px;color:#444;font-weight:400;">Default</div><div class="t" style="left:145.0px;width:60px;text-align:right;top:259.92px;font-size:9.9px;line-height:9.9px;color:#333;">2388</div><svg class="s" style="left:213.2px;top:260.52px" width="10" height="8" viewBox="0 0 10 8"><path d="M0.55 4 C2.6 -0.67, 7.4 -0.67, 9.45 4 C7.4 8.67, 2.6 8.67, 0.55 4Z" stroke="#5a5a5a" stroke-width="1.05" fill="none"/><circle cx="5" cy="4" r="1.8" stroke="#5a5a5a" stroke-width="0.9" fill="none"/><circle cx="5" cy="4" r="0.55" fill="#5a5a5a"/></svg><svg class="s" style="left:32.0px;top:277.39px" width="6" height="4" viewBox="0 0 6 4"><path d="M0.2 0.4 L5.2 0.4 L2.7 3.4Z" fill="#222"/></svg><div class="t" style="left:39.8px;top:273.92px;font-size:9.9px;line-height:9.9px;color:#444;font-weight:400;">Medical Clinic [Medical Clinic]</div><div class="t" style="left:145.0px;width:60px;text-align:right;top:273.92px;font-size:9.9px;line-height:9.9px;color:#333;">2387</div><svg class="s" style="left:213.2px;top:274.79px" width="10" height="8" viewBox="0 0 10 8"><path d="M0.55 4 C2.6 -0.67, 7.4 -0.67, 9.45 4 C7.4 8.67, 2.6 8.67, 0.55 4Z" stroke="#5a5a5a" stroke-width="1.05" fill="none"/><circle cx="5" cy="4" r="1.8" stroke="#5a5a5a" stroke-width="0.9" fill="none"/><circle cx="5" cy="4" r="0.55" fill="#5a5a5a"/></svg><svg class="s" style="left:39.2px;top:290.86px" width="4" height="6" viewBox="0 0 4 6"><path d="M0.4 0.2 L3.4 2.7 L0.4 5.2Z" fill="#222"/></svg><div class="t" style="left:46.8px;top:287.92px;font-size:9.9px;line-height:9.9px;color:#444;font-weight:400;">Level 1 [Level 1]</div><div class="t" style="left:145.0px;width:60px;text-align:right;top:287.92px;font-size:9.9px;line-height:9.9px;color:#333;">1334</div><svg class="s" style="left:213.2px;top:289.06px" width="10" height="8" viewBox="0 0 10 8"><path d="M0.55 4 C2.6 -0.67, 7.4 -0.67, 9.45 4 C7.4 8.67, 2.6 8.67, 0.55 4Z" stroke="#5a5a5a" stroke-width="1.05" fill="none"/><circle cx="5" cy="4" r="1.8" stroke="#5a5a5a" stroke-width="0.9" fill="none"/><circle cx="5" cy="4" r="0.55" fill="#5a5a5a"/></svg><svg class="s" style="left:39.2px;top:305.13px" width="4" height="6" viewBox="0 0 4 6"><path d="M0.4 0.2 L3.4 2.7 L0.4 5.2Z" fill="#222"/></svg><div class="t" style="left:46.8px;top:302.92px;font-size:9.9px;line-height:9.9px;color:#444;font-weight:400;">Level 2 [Level 2]</div><div class="t" style="left:145.0px;width:60px;text-align:right;top:302.92px;font-size:9.9px;line-height:9.9px;color:#333;">1045</div><svg class="s" style="left:213.2px;top:303.33px" width="10" height="8" viewBox="0 0 10 8"><path d="M0.55 4 C2.6 -0.67, 7.4 -0.67, 9.45 4 C7.4 8.67, 2.6 8.67, 0.55 4Z" stroke="#5a5a5a" stroke-width="1.05" fill="none"/><circle cx="5" cy="4" r="1.8" stroke="#5a5a5a" stroke-width="0.9" fill="none"/><circle cx="5" cy="4" r="0.55" fill="#5a5a5a"/></svg><svg class="s" style="left:39.2px;top:319.40px" width="4" height="6" viewBox="0 0 4 6"><path d="M0.4 0.2 L3.4 2.7 L0.4 5.2Z" fill="#222"/></svg><div class="t" style="left:46.8px;top:316.92px;font-size:9.9px;line-height:9.9px;color:#444;font-weight:400;">Roof - Main [Roof - Main]</div><div class="t" style="left:145.0px;width:60px;text-align:right;top:316.92px;font-size:9.9px;line-height:9.9px;color:#333;">5</div><svg class="s" style="left:213.2px;top:317.60px" width="10" height="8" viewBox="0 0 10 8"><path d="M0.55 4 C2.6 -0.67, 7.4 -0.67, 9.45 4 C7.4 8.67, 2.6 8.67, 0.55 4Z" stroke="#5a5a5a" stroke-width="1.05" fill="none"/><circle cx="5" cy="4" r="1.8" stroke="#5a5a5a" stroke-width="0.9" fill="none"/><circle cx="5" cy="4" r="0.55" fill="#5a5a5a"/></svg><svg class="s" style="left:10.2px;top:334.46px" width="6" height="4" viewBox="0 0 6 4"><path d="M0.2 0.4 L5.2 0.4 L2.7 3.4Z" fill="#222"/></svg><div class="t" style="left:18.6px;top:330.92px;font-size:9.9px;line-height:9.9px;color:#222;font-weight:700;">Medical Clinic Con</div><svg class="s" style="left:195.0px;top:330.26px" width="11" height="10" viewBox="0 0 11 10"><rect x="0.5" y="0.5" width="9.5" height="9.5" fill="#fff" stroke="#b9c6d6" stroke-width="1"/><rect x="2.2" y="2.2" width="6.1" height="6.1" fill="#b49be6"/></svg><svg class="s" style="left:213.3px;top:330.96px" width="10" height="10" viewBox="0 0 10 10"><rect x="0" y="0" width="9.6" height="9.6" fill="#111"/><rect x="1" y="1" width="1.9" height="1.9" fill="#fff"/><rect x="1" y="5" width="1.9" height="1.9" fill="#fff"/><rect x="3" y="3" width="1.9" height="1.9" fill="#fff"/><rect x="3" y="7" width="1.9" height="1.9" fill="#fff"/><rect x="5" y="1" width="1.9" height="1.9" fill="#fff"/><rect x="5" y="5" width="1.9" height="1.9" fill="#fff"/><rect x="7" y="3" width="1.9" height="1.9" fill="#fff"/><rect x="7" y="7" width="1.9" height="1.9" fill="#fff"/></svg><svg class="s" style="left:17.5px;top:348.73px" width="6" height="4" viewBox="0 0 6 4"><path d="M0.2 0.4 L5.2 0.4 L2.7 3.4Z" fill="#222"/></svg><div class="t" style="left:25.6px;top:345.92px;font-size:9.9px;line-height:9.9px;color:#444;font-weight:400;">Project Number</div><div class="t" style="left:145.0px;width:60px;text-align:right;top:345.92px;font-size:9.9px;line-height:9.9px;color:#333;">1093</div><svg class="s" style="left:213.2px;top:346.13px" width="10" height="8" viewBox="0 0 10 8"><path d="M0.55 4 C2.6 -0.67, 7.4 -0.67, 9.45 4 C7.4 8.67, 2.6 8.67, 0.55 4Z" stroke="#5a5a5a" stroke-width="1.05" fill="none"/><circle cx="5" cy="4" r="1.8" stroke="#5a5a5a" stroke-width="0.9" fill="none"/><circle cx="5" cy="4" r="0.55" fill="#5a5a5a"/></svg><svg class="s" style="left:24.7px;top:363.00px" width="6" height="4" viewBox="0 0 6 4"><path d="M0.2 0.4 L5.2 0.4 L2.7 3.4Z" fill="#222"/></svg><div class="t" style="left:32.7px;top:359.92px;font-size:9.9px;line-height:9.9px;color:#444;font-weight:400;">Default</div><div class="t" style="left:145.0px;width:60px;text-align:right;top:359.92px;font-size:9.9px;line-height:9.9px;color:#333;">1092</div><svg class="s" style="left:213.2px;top:360.40px" width="10" height="8" viewBox="0 0 10 8"><path d="M0.55 4 C2.6 -0.67, 7.4 -0.67, 9.45 4 C7.4 8.67, 2.6 8.67, 0.55 4Z" stroke="#5a5a5a" stroke-width="1.05" fill="none"/><circle cx="5" cy="4" r="1.8" stroke="#5a5a5a" stroke-width="0.9" fill="none"/><circle cx="5" cy="4" r="0.55" fill="#5a5a5a"/></svg><svg class="s" style="left:32.0px;top:377.27px" width="6" height="4" viewBox="0 0 6 4"><path d="M0.2 0.4 L5.2 0.4 L2.7 3.4Z" fill="#222"/></svg><div class="t" style="left:39.8px;top:373.92px;font-size:9.9px;line-height:9.9px;color:#444;font-weight:400;">IfcBuilding</div><div class="t" style="left:145.0px;width:60px;text-align:right;top:373.92px;font-size:9.9px;line-height:9.9px;color:#333;">1091</div><svg class="s" style="left:213.2px;top:374.67px" width="10" height="8" viewBox="0 0 10 8"><path d="M0.55 4 C2.6 -0.67, 7.4 -0.67, 9.45 4 C7.4 8.67, 2.6 8.67, 0.55 4Z" stroke="#5a5a5a" stroke-width="1.05" fill="none"/><circle cx="5" cy="4" r="1.8" stroke="#5a5a5a" stroke-width="0.9" fill="none"/><circle cx="5" cy="4" r="0.55" fill="#5a5a5a"/></svg><svg class="s" style="left:39.2px;top:390.74px" width="4" height="6" viewBox="0 0 4 6"><path d="M0.4 0.2 L3.4 2.7 L0.4 5.2Z" fill="#222"/></svg><div class="t" style="left:46.8px;top:387.92px;font-size:9.9px;line-height:9.9px;color:#444;font-weight:400;">First Floor</div><div class="t" style="left:145.0px;width:60px;text-align:right;top:387.92px;font-size:9.9px;line-height:9.9px;color:#333;">463</div><svg class="s" style="left:213.2px;top:388.94px" width="10" height="8" viewBox="0 0 10 8"><path d="M0.55 4 C2.6 -0.67, 7.4 -0.67, 9.45 4 C7.4 8.67, 2.6 8.67, 0.55 4Z" stroke="#5a5a5a" stroke-width="1.05" fill="none"/><circle cx="5" cy="4" r="1.8" stroke="#5a5a5a" stroke-width="0.9" fill="none"/><circle cx="5" cy="4" r="0.55" fill="#5a5a5a"/></svg><svg class="s" style="left:39.2px;top:405.00px" width="4" height="6" viewBox="0 0 4 6"><path d="M0.4 0.2 L3.4 2.7 L0.4 5.2Z" fill="#222"/></svg><div class="t" style="left:46.8px;top:402.92px;font-size:9.9px;line-height:9.9px;color:#444;font-weight:400;">Roof - Main</div><div class="t" style="left:145.0px;width:60px;text-align:right;top:402.92px;font-size:9.9px;line-height:9.9px;color:#333;">34</div><svg class="s" style="left:213.2px;top:403.20px" width="10" height="8" viewBox="0 0 10 8"><path d="M0.55 4 C2.6 -0.67, 7.4 -0.67, 9.45 4 C7.4 8.67, 2.6 8.67, 0.55 4Z" stroke="#5a5a5a" stroke-width="1.05" fill="none"/><circle cx="5" cy="4" r="1.8" stroke="#5a5a5a" stroke-width="0.9" fill="none"/><circle cx="5" cy="4" r="0.55" fill="#5a5a5a"/></svg><svg class="s" style="left:39.2px;top:419.27px" width="4" height="6" viewBox="0 0 4 6"><path d="M0.4 0.2 L3.4 2.7 L0.4 5.2Z" fill="#222"/></svg><div class="t" style="left:46.8px;top:416.92px;font-size:9.9px;line-height:9.9px;color:#444;font-weight:400;">Second Floor</div><div class="t" style="left:145.0px;width:60px;text-align:right;top:416.92px;font-size:9.9px;line-height:9.9px;color:#333;">388</div><svg class="s" style="left:213.2px;top:417.47px" width="10" height="8" viewBox="0 0 10 8"><path d="M0.55 4 C2.6 -0.67, 7.4 -0.67, 9.45 4 C7.4 8.67, 2.6 8.67, 0.55 4Z" stroke="#5a5a5a" stroke-width="1.05" fill="none"/><circle cx="5" cy="4" r="1.8" stroke="#5a5a5a" stroke-width="0.9" fill="none"/><circle cx="5" cy="4" r="0.55" fill="#5a5a5a"/></svg><svg class="s" style="left:39.2px;top:433.54px" width="4" height="6" viewBox="0 0 4 6"><path d="M0.4 0.2 L3.4 2.7 L0.4 5.2Z" fill="#222"/></svg><div class="t" style="left:46.8px;top:430.92px;font-size:9.9px;line-height:9.9px;color:#444;font-weight:400;">TOF Footing</div><div class="t" style="left:145.0px;width:60px;text-align:right;top:430.92px;font-size:9.9px;line-height:9.9px;color:#333;">202</div><svg class="s" style="left:213.2px;top:431.74px" width="10" height="8" viewBox="0 0 10 8"><path d="M0.55 4 C2.6 -0.67, 7.4 -0.67, 9.45 4 C7.4 8.67, 2.6 8.67, 0.55 4Z" stroke="#5a5a5a" stroke-width="1.05" fill="none"/><circle cx="5" cy="4" r="1.8" stroke="#5a5a5a" stroke-width="0.9" fill="none"/><circle cx="5" cy="4" r="0.55" fill="#5a5a5a"/></svg></div><div class="r" style="left:1043px;top:103px;width:1px;height:473px;background:#dadada;"></div><svg class="s" style="left:304px;top:101.5px;overflow:hidden;mix-blend-mode:multiply;pointer-events:none" width="501" height="474.5" viewBox="304 101.5 501 474.5"><g fill="#f8f1f8"><path fill-rule="evenodd" d="M36,253 H151 C205,253 243,300 243,360 C243,420 205,467 151,467 H95 V564 H36 Z M95,287 V427 H140 C165,427 183,395 183,357 C183,320 165,287 140,287 Z"/><path d="M293,464.3 V254 H349 V275 L392,253.5 Q398,251.5 404,251.5 H416.3 V291 C395,291 370,300 349,325 V464.3 Z"/><path d="M454.6,464.3 V254 H512.6 V266 C525,256 540,251 560,251 C585,251 610,262 630,280 L651,300 C660,275 680,251 705,251 H735 C765,251 787.5,280 787.5,315 V464.3 H729 V338 C729,315 717,300 700,300 C678,300 660,315 651,340 V464.3 H592 V338 C592,315 580,300 562,300 C540,300 522,312 512.6,330 V464.3 Z"/></g></svg><svg class="s" style="left:304px;top:101.5px" width="501" height="474.5" viewBox="304 101.5 501 474.5"><defs><linearGradient id="vg" x1="0" y1="0" x2="0.25" y2="1"><stop offset="0" stop-color="#aca7a9"/><stop offset="0.55" stop-color="#a09b9d"/><stop offset="1" stop-color="#928d90"/></linearGradient></defs><polygon points="524.5,245 544,237.8 552.6,236.5 586.9,247.1 608,239.5 622.5,243.5 622.5,255.6 599.4,251 772.1,299.5 716.2,323.8 640,302 600,285" fill="#4a9a34" /><polyline points="524.5,244.5 544,237.8 552.6,236.5 586.9,247.1 608,239.5 622.5,243.5" stroke="#6e6b6f" stroke-width="2.2" fill="none" /><polyline points="599.4,251 772.1,299.5" stroke="#6e6b6f" stroke-width="2.2" fill="none" /><polygon points="599.4,251 622.5,243.5 622.5,255.6 612,254" fill="#8c898d" /><polygon points="640,302 716.2,323.8 716.2,343 640,320" fill="#646066" /><polygon points="662,317 713.5,332.5 713.5,343 662,327" fill="#76695b" /><polygon points="377.9,288.5 478.5,260.1 572.4,290.2 609.1,309 646,325.7 682.6,340.6 600.3,376.6" fill="#48972f" /><polyline points="377.9,288.5 478.5,259.6" stroke="#6e6b6f" stroke-width="2.2" fill="none" /><polygon points="478.5,260.1 572.4,290.2 571.5,301 480.3,275" fill="#6a666a" /><polygon points="494.4,267 560.2,287.5 560.2,293 494.4,272.5" fill="#8d9cb0" /><polyline points="494.4,269.8 560.2,290.3" stroke="#c9ced6" stroke-width="1.2" fill="none" /><polyline points="494.4,267.4 494.4,273.2" stroke="#5f5b60" stroke-width="0.7" fill="none" /><polyline points="501.7,269.69730999999996 501.7,275.49730999999997" stroke="#5f5b60" stroke-width="0.7" fill="none" /><polyline points="509.0,271.99462 509.0,277.79462" stroke="#5f5b60" stroke-width="0.7" fill="none" /><polyline points="516.3,274.29193 516.3,280.09193" stroke="#5f5b60" stroke-width="0.7" fill="none" /><polyline points="523.6,276.58923999999996 523.6,282.38924" stroke="#5f5b60" stroke-width="0.7" fill="none" /><polyline points="530.9,278.88655 530.9,284.68655" stroke="#5f5b60" stroke-width="0.7" fill="none" /><polyline points="538.1999999999999,281.18386 538.1999999999999,286.98386" stroke="#5f5b60" stroke-width="0.7" fill="none" /><polyline points="545.5,283.48116999999996 545.5,289.28117" stroke="#5f5b60" stroke-width="0.7" fill="none" /><polyline points="552.8,285.77848 552.8,291.57848" stroke="#5f5b60" stroke-width="0.7" fill="none" /><polygon points="485,262 490,263.5 490,278 485,276.5" fill="#9a7a52" /><polygon points="563,290 569,292 569,301 563,299" fill="#9a7a52" /><path d="M572.4,290.2 C577,282 588,274 596,271.4 C602,270 611,270 616.6,274.2 L616.6,285 L571.5,301 Z" fill="#6d6a70"/><path d="M580,287 C586,280 594,276 600,275 C606,274.5 610,276 612,278 L612,286 L580,298 Z" fill="#8ea3b9"/><path d="M478.5,260.1 C482,250 495,243 507.6,242.2 C514,242 520,243.5 524.5,245 L616.6,274.2 C611,270 602,270 596,271.4 C588,274 577,282 572.4,290.2 Z" fill="url(#vg)"/><polyline points="478.5,260.1 572.4,290.2" stroke="#7a7679" stroke-width="1" fill="none" /><polygon points="576.2,296.7 609.1,309 609.1,315.5 576.2,305.2" fill="#6a666a" /><polyline points="593,302.5 593,311" stroke="#c8c4c4" stroke-width="0.9" fill="none" /><polyline points="604,307 604,315" stroke="#c8c4c4" stroke-width="0.9" fill="none" /><path d="M609.1,309 C614,302 624,296 633.5,293 C637,292.3 641,293 643.9,294.8 L643.9,302 L609.1,315.5 Z" fill="#6d6a70"/><path d="M617,304 C622,299 628,296.5 634,296 L638,297 L638,302 L617,310 Z" fill="#8ea3b9"/><path d="M576.2,296.7 C578,289 588,280 597.8,278.9 L643.9,294.8 C638,292.5 628,295 620.4,299.5 C615,302 611,306 609.1,309 Z" fill="url(#vg)"/><polygon points="611,311 646,325.7 646,329.5 611,315" fill="#6a666a" /><path d="M646,325.7 C650,320 660,316 671.7,315.8 L671.7,321 L646,329.5 Z" fill="#7a767a"/><path d="M654,323 C658,320.5 662,319.5 666,319.3 L666,321.5 L654,326 Z" fill="#7f95ad"/><path d="M611,311.5 C614,306 619,303.5 624.1,303.3 L671.7,315.8 C662,316 651,320 646,325.7 Z" fill="url(#vg)"/><polygon points="646,327 683,345 683,349 646,331" fill="#6a666a" /><path d="M646,327 C649,322 654,319.5 660,319.5 L705.3,342 C703,339 699,337 694,337 C690,337 686,339 683,345 Z" fill="url(#vg)"/><polygon points="377.9,288.5 600.3,376.6 600.3,448.8 494,404.5 494,366 379,318" fill="#5d5c5e" /><polyline points="494,375.5 600.3,412.5" stroke="#4d494d" stroke-width="0.9" fill="none" /><polygon points="600.3,376.6 682.6,340.6 682.6,406.2 600.3,448.8" fill="#858286" /><polygon points="682.6,345 716.2,336 716.2,388.8 682.6,406.2" fill="#7a767b" /><polygon points="688,348 716.2,340 716.2,360 688,368" fill="#5e5b5f" /><path d="M683,345 C686,339 690,337 694,337 C699,337 703,339 705.3,342 L705.3,350 L683,356 Z" fill="#6d6a70"/><path d="M687,346 C689,342.5 691,341 694,341 L694,352 L687,354 Z" fill="#8ea3b9"/><polygon points="716.2,323.8 772.1,299.5 768.8,361.7 716.2,388.8" fill="#858286" /><polyline points="600.3,376.6 682.6,340.6" stroke="#8a868a" stroke-width="1" fill="none" /><polyline points="716.2,323.8 772.1,299.5" stroke="#8a868a" stroke-width="1" fill="none" /><polyline points="600.3,412.5 682.6,376" stroke="#5f5b5f" stroke-width="0.8" fill="none" /><polyline points="716.2,346.5 770,330" stroke="#5f5b5f" stroke-width="0.8" fill="none" /><polyline points="600.3,376.6 600.3,448.8" stroke="#4f4b4f" stroke-width="0.8" fill="none" /><polygon points="690.5,374.3 705.3,369 705.3,395 690.5,401" fill="#8aa0b6" /><polygon points="693,377 703,373 703,393 693,397.5" fill="#8a5a2a" /><polyline points="698,375 698,396" stroke="#c9b28a" stroke-width="0.8" fill="none" /><path d="M686.5,369.3 C687,361 689,355.5 692.5,352.5 L721.2,359.4 C718,360.5 715,362.5 713,366 L700,372 Z" fill="#969294"/><polyline points="686.5,370.8 700,373.5 723.2,364" stroke="#d3d0d0" stroke-width="2" fill="none" /><polygon points="694.5,373.3 698.4,372.3 698.4,411 694.5,412" fill="#d6d3d3" /><polygon points="718.2,363.4 722.2,362.4 722.2,398 718.2,399" fill="#d6d3d3" /><polygon points="690.5,407.5 700.4,405 700.4,410.5 690.5,413" fill="#e9e8e8" /><polygon points="714.3,395 723.2,393 723.2,398 714.3,400" fill="#e9e8e8" /><polygon points="309.9,324.1 377.9,303.7 379,318 494,366 441.5,385" fill="#48972f" /><polyline points="309.9,324.1 377.9,303.7" stroke="#6e6b6f" stroke-width="2" fill="none" /><polyline points="309.9,324.5 441.5,385.5 494,366" stroke="#77737a" stroke-width="1.1" fill="none" /><polygon points="309.9,324.1 441.5,385 441.5,425 399,410 399,396 311,362" fill="#5d5c5e" /><polygon points="441.5,385 494,365.8 494,404.5 441.5,425" fill="#858286" /><polyline points="441.5,385 441.5,425" stroke="#4f4b4f" stroke-width="0.8" fill="none" /><polygon points="341.7,353 349.3,356.5 349.3,367 341.7,363.5" fill="#c9a46a" /><polygon points="362.6,367.4 372,371.5 372,381 362.6,377" fill="#b08a55" /><polygon points="304,356 341,368 341,371.5 304,359.5" fill="#c9cfd9" /><polyline points="304,367 321,375" stroke="#e6e8ec" stroke-width="1.4" fill="none" /><polygon points="304,372 317,378 340,369 399,393 399,395.5 304,431.5" fill="#a9a7a8" /><polygon points="313,384 345,371 365,380 332,393" fill="#bcbabb" /><polygon points="332,391 373,376.5 384,380.5 343,395.5" fill="#cdcbcc" /><polygon points="343,395.5 384,380.5 384,396 343,412" fill="#9d9b9c" /><polygon points="332,391 343,395.5 343,412 332,407.5" fill="#b3b1b2" /><ellipse cx="340.0" cy="389.5" rx="2.4" ry="1.2" fill="#e2e0e1"/><ellipse cx="346.0" cy="391.5" rx="2.4" ry="1.2" fill="#dad8d9"/><ellipse cx="346.6" cy="387.1" rx="2.4" ry="1.2" fill="#e2e0e1"/><ellipse cx="352.6" cy="389.1" rx="2.4" ry="1.2" fill="#dad8d9"/><ellipse cx="353.2" cy="384.7" rx="2.4" ry="1.2" fill="#e2e0e1"/><ellipse cx="359.2" cy="386.7" rx="2.4" ry="1.2" fill="#dad8d9"/><ellipse cx="359.8" cy="382.3" rx="2.4" ry="1.2" fill="#e2e0e1"/><ellipse cx="365.8" cy="384.3" rx="2.4" ry="1.2" fill="#dad8d9"/><ellipse cx="366.4" cy="379.9" rx="2.4" ry="1.2" fill="#e2e0e1"/><ellipse cx="372.4" cy="381.9" rx="2.4" ry="1.2" fill="#dad8d9"/><ellipse cx="373.0" cy="377.5" rx="2.4" ry="1.2" fill="#e2e0e1"/><ellipse cx="379.0" cy="379.5" rx="2.4" ry="1.2" fill="#dad8d9"/><polygon points="304,431.5 399,395.5 401,410.5 304,446.5" fill="#8c8a8b" /><polyline points="304,431.5 399,395.5" stroke="#b4b2b3" stroke-width="1" fill="none" /><polygon points="304,446.5 401,410.5 402.5,414 304,450.5" fill="#eceaea" /><polygon points="311.8,393.3 323.6,398 323.6,410.5 311.8,405.8" fill="#744520" /><polygon points="326.8,401.9 338.6,406.5 338.6,418 326.8,413.4" fill="#744520" /><polyline points="401,411.5 442,427.3 494,405.8" stroke="#e8e6e6" stroke-width="2.6" fill="none" /><polyline points="495,406.5 600.3,450.6" stroke="#3d93dc" stroke-width="3" fill="none" /><polyline points="600.3,450.6 769,363.3" stroke="#3d93dc" stroke-width="3" fill="none" /><polyline points="519,416.3 527,419.7" stroke="#e8e6e6" stroke-width="2.8" fill="none" /><polyline points="557,432.3 565,435.7" stroke="#e8e6e6" stroke-width="2.8" fill="none" /><polyline points="585,444.3 593,447.7" stroke="#e8e6e6" stroke-width="2.8" fill="none" /><polyline points="641.5,428.8 650.5,424.2" stroke="#e8e6e6" stroke-width="2.8" fill="none" /><polyline points="665.5,416.3 674.5,411.7" stroke="#e8e6e6" stroke-width="2.8" fill="none" /><polyline points="705.5,395.8 714.5,391.2" stroke="#e8e6e6" stroke-width="2.8" fill="none" /><polyline points="730.5,382.8 739.5,378.2" stroke="#e8e6e6" stroke-width="2.8" fill="none" /><polyline points="755.5,369.8 764.5,365.2" stroke="#e8e6e6" stroke-width="2.8" fill="none" /><polygon points="600,447 606,449 606,453 600,455 594,452 594,448" fill="#eeeded" /><polygon points="764,361 770,360 772,364 766,367" fill="#eeeded" /><polygon points="401,410 409.6,413.5 409,416 400.5,413" fill="#3a8ed8" /><polygon points="388.4,311.0 392.79999999999995,312.76 392.79999999999995,322.46 388.4,320.7" fill="#cdbf9f"/><polygon points="389.3,311.8 391.90000000000003,312.84000000000003 391.90000000000003,320.74 389.3,319.7" fill="#5f7896"/><polygon points="389.5,312.20000000000005 390.78,312.71200000000005 390.78,316.96200000000005 389.5,316.45000000000005" fill="#8fa6bf"/><polygon points="407.4,318.4 411.79999999999995,320.15999999999997 411.79999999999995,329.85999999999996 407.4,328.09999999999997" fill="#cdbf9f"/><polygon points="408.3,319.2 410.90000000000003,320.24 410.90000000000003,328.14 408.3,327.09999999999997" fill="#5f7896"/><polygon points="408.5,319.6 409.78,320.112 409.78,324.362 408.5,323.85" fill="#8fa6bf"/><polygon points="424.59999999999997,327.4 428.99999999999994,329.15999999999997 428.99999999999994,338.85999999999996 424.59999999999997,337.09999999999997" fill="#cdbf9f"/><polygon points="425.5,328.2 428.1,329.24 428.1,337.14 425.5,336.09999999999997" fill="#5f7896"/><polygon points="425.7,328.6 426.97999999999996,329.112 426.97999999999996,333.362 425.7,332.85" fill="#8fa6bf"/><polygon points="437.9,331.9 442.29999999999995,333.65999999999997 442.29999999999995,343.35999999999996 437.9,341.59999999999997" fill="#cdbf9f"/><polygon points="438.8,332.7 441.40000000000003,333.74 441.40000000000003,341.64 438.8,340.59999999999997" fill="#5f7896"/><polygon points="439.0,333.1 440.28,333.612 440.28,337.862 439.0,337.35" fill="#8fa6bf"/><polygon points="445.4,334.9 449.79999999999995,336.65999999999997 449.79999999999995,346.35999999999996 445.4,344.59999999999997" fill="#cdbf9f"/><polygon points="446.3,335.7 448.90000000000003,336.74 448.90000000000003,344.64 446.3,343.59999999999997" fill="#5f7896"/><polygon points="446.5,336.1 447.78,336.612 447.78,340.862 446.5,340.35" fill="#8fa6bf"/><polygon points="455.0,339.4 459.4,341.15999999999997 459.4,350.85999999999996 455.0,349.09999999999997" fill="#cdbf9f"/><polygon points="455.90000000000003,340.2 458.50000000000006,341.24 458.50000000000006,349.14 455.90000000000003,348.09999999999997" fill="#5f7896"/><polygon points="456.1,340.6 457.38,341.112 457.38,345.362 456.1,344.85" fill="#8fa6bf"/><polygon points="468.29999999999995,345.09999999999997 472.69999999999993,346.85999999999996 472.69999999999993,356.55999999999995 468.29999999999995,354.79999999999995" fill="#cdbf9f"/><polygon points="469.2,345.9 471.8,346.94 471.8,354.84 469.2,353.79999999999995" fill="#5f7896"/><polygon points="469.4,346.3 470.67999999999995,346.812 470.67999999999995,351.062 469.4,350.55" fill="#8fa6bf"/><polygon points="485.4,352.7 489.79999999999995,354.46 489.79999999999995,364.15999999999997 485.4,362.4" fill="#cdbf9f"/><polygon points="486.3,353.5 488.90000000000003,354.54 488.90000000000003,362.44 486.3,361.4" fill="#5f7896"/><polygon points="486.5,353.90000000000003 487.78,354.41200000000003 487.78,358.66200000000003 486.5,358.15000000000003" fill="#8fa6bf"/><polygon points="494.79999999999995,356.4 499.19999999999993,358.15999999999997 499.19999999999993,367.85999999999996 494.79999999999995,366.09999999999997" fill="#cdbf9f"/><polygon points="495.7,357.2 498.3,358.24 498.3,366.14 495.7,365.09999999999997" fill="#5f7896"/><polygon points="495.9,357.6 497.17999999999995,358.112 497.17999999999995,362.362 495.9,361.85" fill="#8fa6bf"/><polygon points="538.0,371.4 542.4,373.15999999999997 542.4,382.85999999999996 538.0,381.09999999999997" fill="#cdbf9f"/><polygon points="538.9,372.2 541.5,373.24 541.5,381.14 538.9,380.09999999999997" fill="#5f7896"/><polygon points="539.1,372.6 540.38,373.112 540.38,377.362 539.1,376.85" fill="#8fa6bf"/><polygon points="562.1,380.4 566.5,382.15999999999997 566.5,391.85999999999996 562.1,390.09999999999997" fill="#cdbf9f"/><polygon points="563.0,381.2 565.6,382.24 565.6,390.14 563.0,389.09999999999997" fill="#5f7896"/><polygon points="563.2,381.6 564.48,382.112 564.48,386.362 563.2,385.85" fill="#8fa6bf"/><polygon points="562.1,409.9 566.5,411.65999999999997 566.5,421.35999999999996 562.1,419.59999999999997" fill="#cdbf9f"/><polygon points="563.0,410.7 565.6,411.74 565.6,419.64 563.0,418.59999999999997" fill="#5f7896"/><polygon points="563.2,411.1 564.48,411.612 564.48,415.862 563.2,415.35" fill="#8fa6bf"/><polygon points="483.9,385.0 488.29999999999995,386.76 488.29999999999995,396.46 483.9,394.7" fill="#cdbf9f"/><polygon points="484.8,385.8 487.40000000000003,386.84000000000003 487.40000000000003,394.74 484.8,393.7" fill="#5f7896"/><polygon points="485.0,386.20000000000005 486.28,386.71200000000005 486.28,390.96200000000005 485.0,390.45000000000005" fill="#8fa6bf"/><polygon points="611.1,389.0 615.9,386.6 615.9,396.8 611.1,399.2" fill="#cdbf9f"/><polygon points="612.0,389.8 615.0,388.3 615.0,396.7 612.0,398.2" fill="#5f7896"/><polygon points="612.2,390.20000000000005 613.6400000000001,389.48 613.6400000000001,393.98 612.2,394.70000000000005" fill="#8fa6bf"/><polygon points="635.8,377.9 640.5999999999999,375.5 640.5999999999999,385.7 635.8,388.09999999999997" fill="#cdbf9f"/><polygon points="636.6999999999999,378.7 639.6999999999999,377.2 639.6999999999999,385.59999999999997 636.6999999999999,387.09999999999997" fill="#5f7896"/><polygon points="636.9,379.1 638.34,378.38 638.34,382.88 636.9,383.6" fill="#8fa6bf"/><polygon points="646.9,373.4 651.6999999999999,371.0 651.6999999999999,381.2 646.9,383.59999999999997" fill="#cdbf9f"/><polygon points="647.8,374.2 650.8,372.7 650.8,381.09999999999997 647.8,382.59999999999997" fill="#5f7896"/><polygon points="648.0,374.6 649.44,373.88 649.44,378.38 648.0,379.1" fill="#8fa6bf"/><polygon points="656.8,368.9 661.5999999999999,366.5 661.5999999999999,376.7 656.8,379.09999999999997" fill="#cdbf9f"/><polygon points="657.6999999999999,369.7 660.6999999999999,368.2 660.6999999999999,376.59999999999997 657.6999999999999,378.09999999999997" fill="#5f7896"/><polygon points="657.9,370.1 659.34,369.38 659.34,373.88 657.9,374.6" fill="#8fa6bf"/><polygon points="680.4,358.0 685.1999999999999,355.6 685.1999999999999,365.8 680.4,368.2" fill="#cdbf9f"/><polygon points="681.3,358.8 684.3,357.3 684.3,365.7 681.3,367.2" fill="#5f7896"/><polygon points="681.5,359.20000000000005 682.94,358.48 682.94,362.98 681.5,363.70000000000005" fill="#8fa6bf"/><polygon points="716.4,339.9 721.1999999999999,337.5 721.1999999999999,347.7 716.4,350.09999999999997" fill="#cdbf9f"/><polygon points="717.3,340.7 720.3,339.2 720.3,347.59999999999997 717.3,349.09999999999997" fill="#5f7896"/><polygon points="717.5,341.1 718.94,340.38 718.94,344.88 717.5,345.6" fill="#8fa6bf"/><polygon points="738.4,328.9 743.1999999999999,326.5 743.1999999999999,336.7 738.4,339.09999999999997" fill="#cdbf9f"/><polygon points="739.3,329.7 742.3,328.2 742.3,336.59999999999997 739.3,338.09999999999997" fill="#5f7896"/><polygon points="739.5,330.1 740.94,329.38 740.94,333.88 739.5,334.6" fill="#8fa6bf"/><polygon points="744.3,325.59999999999997 749.0999999999999,323.2 749.0999999999999,333.4 744.3,335.79999999999995" fill="#cdbf9f"/><polygon points="745.1999999999999,326.4 748.1999999999999,324.9 748.1999999999999,333.29999999999995 745.1999999999999,334.79999999999995" fill="#5f7896"/><polygon points="745.4,326.8 746.84,326.08 746.84,330.58 745.4,331.3" fill="#8fa6bf"/><polygon points="762.4,317.4 767.1999999999999,315.0 767.1999999999999,325.2 762.4,327.59999999999997" fill="#cdbf9f"/><polygon points="763.3,318.2 766.3,316.7 766.3,325.09999999999997 763.3,326.59999999999997" fill="#5f7896"/><polygon points="763.5,318.6 764.94,317.88 764.94,322.38 763.5,323.1" fill="#8fa6bf"/><polygon points="611.1,420.4 615.9,418.0 615.9,428.2 611.1,430.59999999999997" fill="#cdbf9f"/><polygon points="612.0,421.2 615.0,419.7 615.0,428.09999999999997 612.0,429.59999999999997" fill="#5f7896"/><polygon points="612.2,421.6 613.6400000000001,420.88 613.6400000000001,425.38 612.2,426.1" fill="#8fa6bf"/><polygon points="622.3,415.4 627.0999999999999,413.0 627.0999999999999,423.2 622.3,425.59999999999997" fill="#cdbf9f"/><polygon points="623.1999999999999,416.2 626.1999999999999,414.7 626.1999999999999,423.09999999999997 623.1999999999999,424.59999999999997" fill="#5f7896"/><polygon points="623.4,416.6 624.84,415.88 624.84,420.38 623.4,421.1" fill="#8fa6bf"/><polygon points="634.3,408.9 639.0999999999999,406.5 639.0999999999999,416.7 634.3,419.09999999999997" fill="#cdbf9f"/><polygon points="635.1999999999999,409.7 638.1999999999999,408.2 638.1999999999999,416.59999999999997 635.1999999999999,418.09999999999997" fill="#5f7896"/><polygon points="635.4,410.1 636.84,409.38 636.84,413.88 635.4,414.6" fill="#8fa6bf"/><polygon points="654.4,398.4 659.1999999999999,396.0 659.1999999999999,406.2 654.4,408.59999999999997" fill="#cdbf9f"/><polygon points="655.3,399.2 658.3,397.7 658.3,406.09999999999997 655.3,407.59999999999997" fill="#5f7896"/><polygon points="655.5,399.6 656.94,398.88 656.94,403.38 655.5,404.1" fill="#8fa6bf"/><polygon points="679.4,385.4 684.1999999999999,383.0 684.1999999999999,393.2 679.4,395.59999999999997" fill="#cdbf9f"/><polygon points="680.3,386.2 683.3,384.7 683.3,393.09999999999997 680.3,394.59999999999997" fill="#5f7896"/><polygon points="680.5,386.6 681.94,385.88 681.94,390.38 680.5,391.1" fill="#8fa6bf"/><polygon points="714.0,368.9 718.8,366.5 718.8,376.7 714.0,379.09999999999997" fill="#cdbf9f"/><polygon points="714.9,369.7 717.9,368.2 717.9,376.59999999999997 714.9,378.09999999999997" fill="#5f7896"/><polygon points="715.1,370.1 716.5400000000001,369.38 716.5400000000001,373.88 715.1,374.6" fill="#8fa6bf"/><polygon points="735.1999999999999,357.0 739.9999999999999,354.6 739.9999999999999,364.8 735.1999999999999,367.2" fill="#cdbf9f"/><polygon points="736.0999999999999,357.8 739.0999999999999,356.3 739.0999999999999,364.7 736.0999999999999,366.2" fill="#5f7896"/><polygon points="736.3,358.20000000000005 737.74,357.48 737.74,361.98 736.3,362.70000000000005" fill="#8fa6bf"/><polygon points="751.6999999999999,348.7 756.4999999999999,346.3 756.4999999999999,356.5 751.6999999999999,358.9" fill="#cdbf9f"/><polygon points="752.5999999999999,349.5 755.5999999999999,348.0 755.5999999999999,356.4 752.5999999999999,357.9" fill="#5f7896"/><polygon points="752.8,349.90000000000003 754.24,349.18 754.24,353.68 752.8,354.40000000000003" fill="#8fa6bf"/><polygon points="759.9,344.59999999999997 764.6999999999999,342.2 764.6999999999999,352.4 759.9,354.79999999999995" fill="#cdbf9f"/><polygon points="760.8,345.4 763.8,343.9 763.8,352.29999999999995 760.8,353.79999999999995" fill="#5f7896"/><polygon points="761.0,345.8 762.44,345.08 762.44,349.58 761.0,350.3" fill="#8fa6bf"/><polygon points="451.4,398.4 456.2,396.47999999999996 456.2,406.17999999999995 451.4,408.09999999999997" fill="#cdbf9f"/><polygon points="452.3,399.2 455.3,398.0 455.3,405.9 452.3,407.09999999999997" fill="#5f7896"/><polygon points="452.5,399.6 453.94,399.024 453.94,403.274 452.5,403.85" fill="#8fa6bf"/><polygon points="461.4,393.4 466.2,391.47999999999996 466.2,401.17999999999995 461.4,403.09999999999997" fill="#cdbf9f"/><polygon points="462.3,394.2 465.3,393.0 465.3,400.9 462.3,402.09999999999997" fill="#5f7896"/><polygon points="462.5,394.6 463.94,394.024 463.94,398.274 462.5,398.85" fill="#8fa6bf"/><polygon points="482.4,383.4 487.2,381.47999999999996 487.2,391.17999999999995 482.4,393.09999999999997" fill="#cdbf9f"/><polygon points="483.3,384.2 486.3,383.0 486.3,390.9 483.3,392.09999999999997" fill="#5f7896"/><polygon points="483.5,384.6 484.94,384.024 484.94,388.274 483.5,388.85" fill="#8fa6bf"/></svg><svg class="s" style="left:0;top:0;mix-blend-mode:multiply;pointer-events:none" width="1064" height="606" viewBox="0 0 1064 606"><g fill="#fcf6f8"><path fill-rule="evenodd" d="M36,253 H151 C205,253 243,300 243,360 C243,420 205,467 151,467 H95 V564 H36 Z M95,287 V427 H140 C165,427 183,395 183,357 C183,320 165,287 140,287 Z"/><path d="M293,464.3 V254 H349 V275 L392,253.5 Q398,251.5 404,251.5 H416.3 V291 C395,291 370,300 349,325 V464.3 Z"/><path d="M454.6,464.3 V254 H512.6 V266 C525,256 540,251 560,251 C585,251 610,262 630,280 L651,300 C660,275 680,251 705,251 H735 C765,251 787.5,280 787.5,315 V464.3 H729 V338 C729,315 717,300 700,300 C678,300 660,315 651,340 V464.3 H592 V338 C592,315 580,300 562,300 C540,300 522,312 512.6,330 V464.3 Z"/></g></svg><svg class="s" style="left:813px;top:66px;overflow:hidden;mix-blend-mode:multiply;pointer-events:none" width="231" height="300" viewBox="813 66 231 300"><g fill="#fcf7f9"><path d="M922.0,122.0 L891.0,175.7 L829.0,175.7 L798.0,122.0 L829.0,68.3 L891.0,68.3Z M1026.0,180.0 L996.5,231.1 L937.5,231.1 L908.0,180.0 L937.5,128.9 L996.5,128.9Z M916.0,237.0 L888.0,285.5 L832.0,285.5 L804.0,237.0 L832.0,188.5 L888.0,188.5Z"/></g></svg>
</body></html>
